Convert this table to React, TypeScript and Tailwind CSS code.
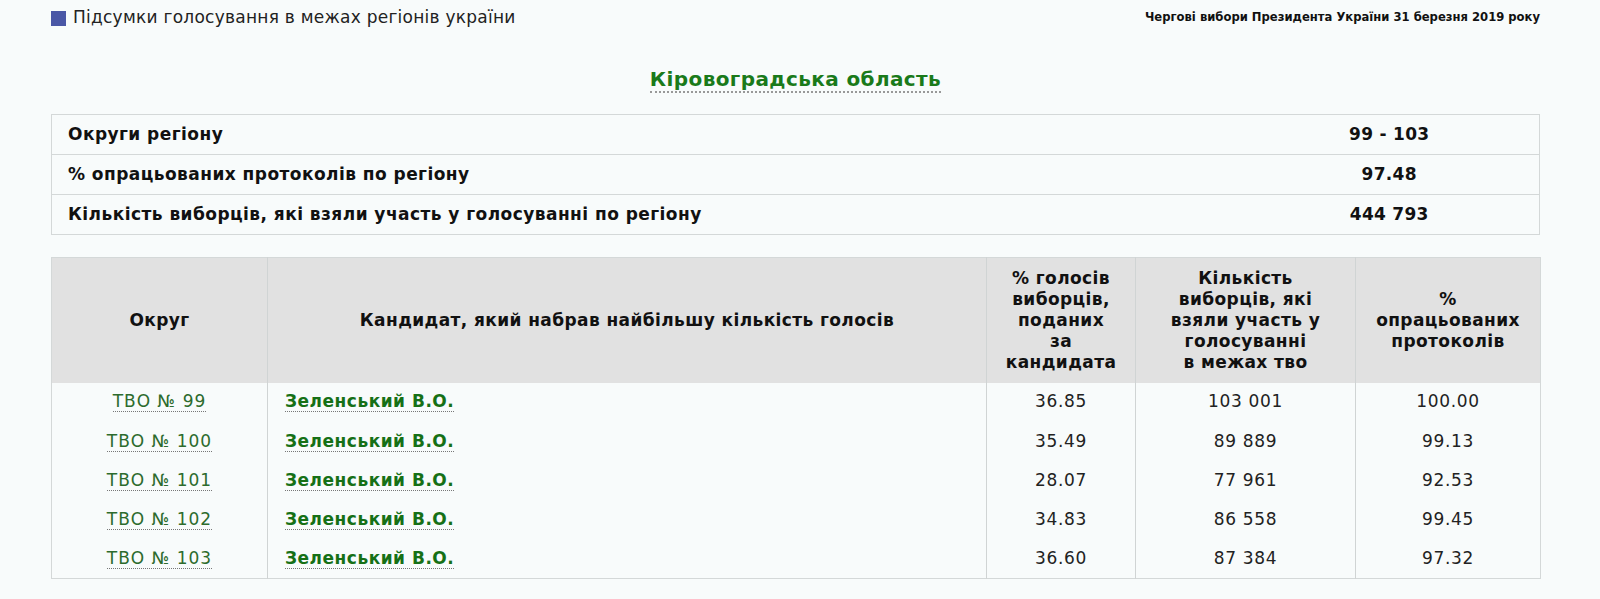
import React from "react";

const rows = [
  { tvo: "ТВО № 99", pct: "36.85", voters: "103 001", proc: "100.00" },
  { tvo: "ТВО № 100", pct: "35.49", voters: "89 889", proc: "99.13" },
  { tvo: "ТВО № 101", pct: "28.07", voters: "77 961", proc: "92.53" },
  { tvo: "ТВО № 102", pct: "34.83", voters: "86 558", proc: "99.45" },
  { tvo: "ТВО № 103", pct: "36.60", voters: "87 384", proc: "97.32" },
];

export default function App() {
  return (
    <div
      className="min-h-[599px] w-[1600px] bg-[#f8fbfb] text-[#111]"
      style={{ fontFamily: "'DejaVu Sans', Verdana, sans-serif" }}
    >
      <div className="ml-[51px] w-[1489px]">
        <div className="flex h-[36px] items-center justify-between">
          <div className="flex items-center">
            <span className="mr-[7px] inline-block h-[15px] w-[15px] bg-[#4a57a6]" />
            <span className="text-[17px] tracking-[0.25px] text-[#222]">Підсумки голосування в межах регіонів україни</span>
          </div>
          <span className="text-[11.6px] font-bold text-[#111]">Чергові вибори Президента України 31 березня 2019 року</span>
        </div>

        <div className="flex h-[78px] items-center justify-center pt-[10px]">
          <span className="border-b-2 border-dotted border-[#999] text-[20px] font-bold leading-[24px] tracking-[0.4px] text-[#1a7a1a]">
            Кіровоградська область
          </span>
        </div>

        <table className="w-full border-collapse border border-[#d4d8d8] bg-[#f8fbfb] text-[17px] font-bold">
          <tbody>
            {[
              ["Округи регіону", "99 - 103"],
              ["% опрацьованих протоколів по регіону", "97.48"],
              ["Кількість виборців, які взяли участь у голосуванні по регіону", "444 793"],
            ].map(([l, v]) => (
              <tr key={l} className="h-[40px] border-b border-[#d4d8d8]">
                <td className="pl-[16px] tracking-[0.45px]">{l}</td>
                <td className="w-[300px] text-center tracking-[0.3px]">{v}</td>
              </tr>
            ))}
          </tbody>
        </table>

        <table className="mt-[22px] w-full table-fixed border-collapse border border-[#d4d8d8] text-[17px]">
          <colgroup>
            <col className="w-[216px]" />
            <col className="w-[719px]" />
            <col className="w-[149px]" />
            <col className="w-[220px]" />
            <col className="w-[185px]" />
          </colgroup>
          <thead>
            <tr className="h-[125px] bg-[#e1e1e1] font-bold leading-[21px] tracking-[0.4px]">
              <th className="border-r border-[#d0d4d4]">Округ</th>
              <th className="border-r border-[#d0d4d4]">Кандидат, який набрав найбільшу кількість голосів</th>
              <th className="border-r border-[#d0d4d4]">
                % голосів
                <br />
                виборців,
                <br />
                поданих
                <br />
                за
                <br />
                кандидата
              </th>
              <th className="border-r border-[#d0d4d4]">
                Кількість
                <br />
                виборців, які
                <br />
                взяли участь у
                <br />
                голосуванні
                <br />в межах тво
              </th>
              <th>
                %
                <br />
                опрацьованих
                <br />
                протоколів
              </th>
            </tr>
          </thead>
          <tbody className="bg-[#f8fbfb]">
            {rows.map((r) => (
              <tr key={r.tvo} className="h-[39.2px]">
                <td className="border-r border-[#d0d4d4] text-center">
                  <span className="border-b border-dotted border-[#777] tracking-[1px] text-[#2d6b2d]">{r.tvo}</span>
                </td>
                <td className="border-r border-[#d0d4d4] pl-[17px]">
                  <span className="border-b border-dotted border-[#777] font-bold tracking-[0.5px] text-[#167016]">Зеленський В.О.</span>
                </td>
                <td className="border-r border-[#d0d4d4] text-center tracking-[0.7px] text-[#222]">{r.pct}</td>
                <td className="border-r border-[#d0d4d4] text-center tracking-[0.7px] text-[#222]">{r.voters}</td>
                <td className="text-center tracking-[0.7px] text-[#222]">{r.proc}</td>
              </tr>
            ))}
          </tbody>
        </table>
      </div>
    </div>
  );
}
